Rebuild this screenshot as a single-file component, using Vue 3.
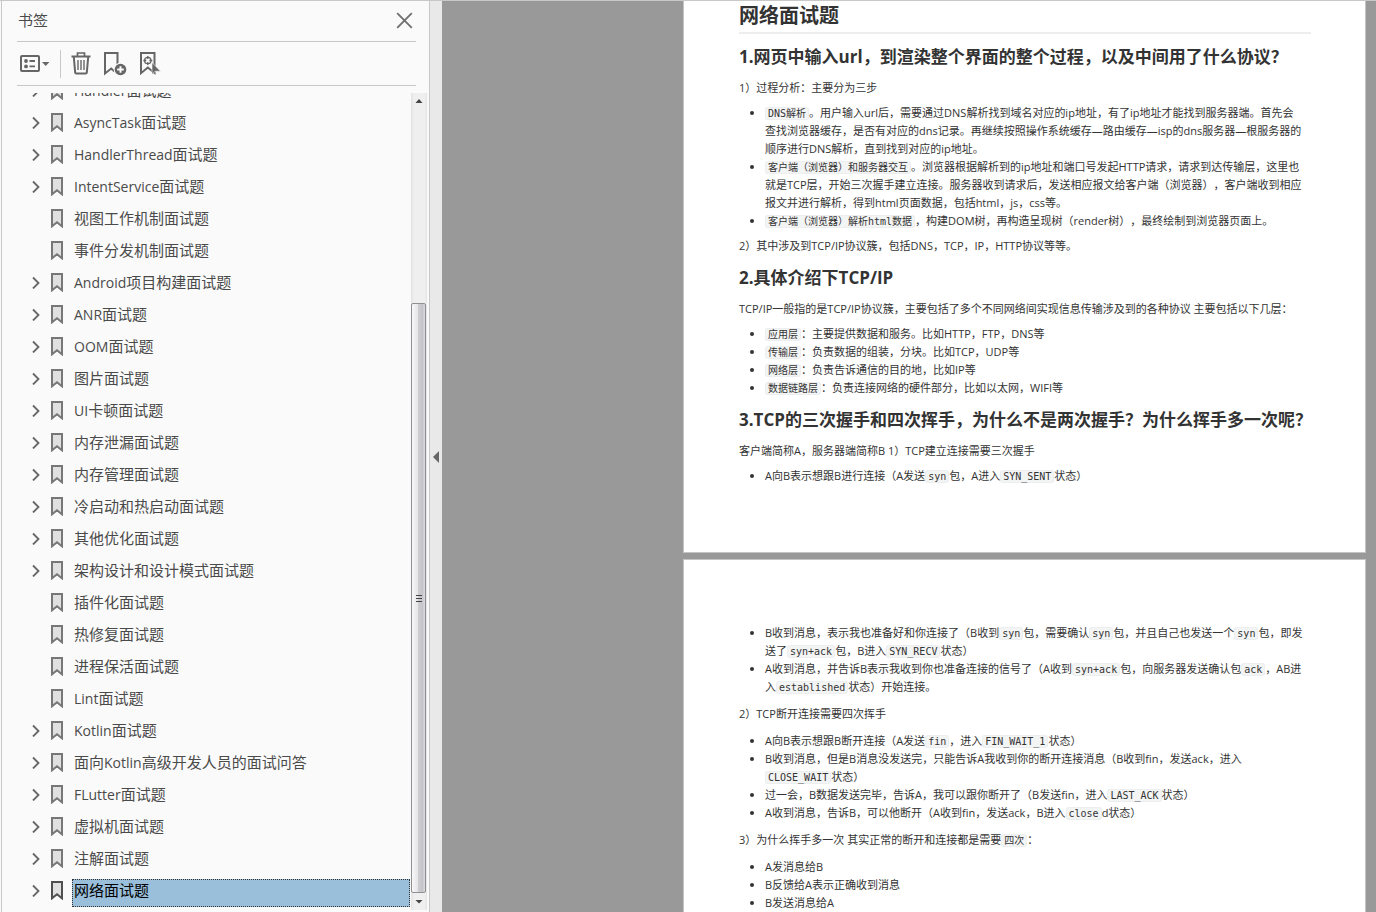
<script setup>
import { ref } from 'vue'

const bookmarks = [
  { title: 'Handler面试题', branch: true },
  { title: 'AsyncTask面试题', branch: true },
  { title: 'HandlerThread面试题', branch: true },
  { title: 'IntentService面试题', branch: true },
  { title: '视图工作机制面试题', branch: false },
  { title: '事件分发机制面试题', branch: false },
  { title: 'Android项目构建面试题', branch: true },
  { title: 'ANR面试题', branch: true },
  { title: 'OOM面试题', branch: true },
  { title: '图片面试题', branch: true },
  { title: 'UI卡顿面试题', branch: true },
  { title: '内存泄漏面试题', branch: true },
  { title: '内存管理面试题', branch: true },
  { title: '冷启动和热启动面试题', branch: true },
  { title: '其他优化面试题', branch: true },
  { title: '架构设计和设计模式面试题', branch: true },
  { title: '插件化面试题', branch: false },
  { title: '热修复面试题', branch: false },
  { title: '进程保活面试题', branch: false },
  { title: 'Lint面试题', branch: false },
  { title: 'Kotlin面试题', branch: true },
  { title: '面向Kotlin高级开发人员的面试问答', branch: true },
  { title: 'FLutter面试题', branch: true },
  { title: '虚拟机面试题', branch: true },
  { title: '注解面试题', branch: true },
  { title: '网络面试题', branch: true },
]
const selected = ref(bookmarks.length - 1)

// Backticks mark inline code, a newline is a line break.
const pages = [
  [
    { tag: 'h1', text: '网络面试题' },
    { tag: 'h2', text: '1.网页中输入url，到渲染整个界面的整个过程，以及中间用了什么协议？' },
    { tag: 'p', text: '1）过程分析：主要分为三步' },
    {
      tag: 'ul',
      items: [
        '`DNS解析`。用户输入url后，需要通过DNS解析找到域名对应的ip地址，有了ip地址才能找到服务器端。首先会\n查找浏览器缓存，是否有对应的dns记录。再继续按照操作系统缓存—路由缓存—isp的dns服务器—根服务器的\n顺序进行DNS解析，直到找到对应的ip地址。',
        '`客户端（浏览器）和服务器交互`。浏览器根据解析到的ip地址和端口号发起HTTP请求，请求到达传输层，这里也\n就是TCP层，开始三次握手建立连接。服务器收到请求后，发送相应报文给客户端（浏览器），客户端收到相应\n报文并进行解析，得到html页面数据，包括html，js，css等。',
        '`客户端（浏览器）解析html数据`，构建DOM树，再构造呈现树（render树），最终绘制到浏览器页面上。',
      ],
    },
    { tag: 'p', text: '2）其中涉及到TCP/IP协议簇，包括DNS，TCP，IP，HTTP协议等等。' },
    { tag: 'h2', text: '2.具体介绍下TCP/IP' },
    { tag: 'p', text: 'TCP/IP一般指的是TCP/IP协议簇，主要包括了多个不同网络间实现信息传输涉及到的各种协议 主要包括以下几层：' },
    {
      tag: 'ul',
      items: [
        '`应用层`：主要提供数据和服务。比如HTTP，FTP，DNS等',
        '`传输层`：负责数据的组装，分块。比如TCP，UDP等',
        '`网络层`：负责告诉通信的目的地，比如IP等',
        '`数据链路层`：负责连接网络的硬件部分，比如以太网，WIFI等',
      ],
    },
    { tag: 'h2', text: '3.TCP的三次握手和四次挥手，为什么不是两次握手？为什么挥手多一次呢？' },
    { tag: 'p', text: '客户端简称A，服务器端简称B 1）TCP建立连接需要三次握手' },
    { tag: 'ul', items: ['A向B表示想跟B进行连接（A发送`syn`包，A进入`SYN_SENT`状态）'] },
  ],
  [
    {
      tag: 'ul',
      items: [
        'B收到消息，表示我也准备好和你连接了（B收到`syn`包，需要确认`syn`包，并且自己也发送一个`syn`包，即发\n送了`syn+ack`包，B进入`SYN_RECV`状态）',
        'A收到消息，并告诉B表示我收到你也准备连接的信号了（A收到`syn+ack`包，向服务器发送确认包`ack`，AB进\n入`established`状态）开始连接。',
      ],
    },
    { tag: 'p', text: '2）TCP断开连接需要四次挥手' },
    {
      tag: 'ul',
      items: [
        'A向B表示想跟B断开连接（A发送`fin`，进入`FIN_WAIT_1`状态）',
        'B收到消息，但是B消息没发送完，只能告诉A我收到你的断开连接消息（B收到fin，发送ack，进入\n`CLOSE_WAIT`状态）',
        '过一会，B数据发送完毕，告诉A，我可以跟你断开了（B发送fin，进入`LAST_ACK`状态）',
        'A收到消息，告诉B，可以他断开（A收到fin，发送ack，B进入`close`d状态）',
      ],
    },
    { tag: 'p', text: '3）为什么挥手多一次 其实正常的断开和连接都是需要`四次`：' },
    { tag: 'ul', items: ['A发消息给B', 'B反馈给A表示正确收到消息', 'B发送消息给A'] },
  ],
]

// Splits a line into inline code and plain text.
function tokens(text) {
  return text
    .split(/(`[^`]+`)/)
    .filter(Boolean)
    .map((part) =>
      part[0] === '`' ? { tag: 'code', text: part.slice(1, -1) } : { tag: 'span', text: part },
    )
}

function scripts(title) {
  return title
    .split(/([A-Za-z]+)/)
    .filter(Boolean)
    .map((text) => ({ text, latin: /^[A-Za-z]/.test(text) }))
}
</script>

<template>
  <div class="app">
    <aside class="sidebar">
      <header class="title">
        <h2>书签</h2>
        <button type="button" class="icon" aria-label="关闭">
          <svg width="17" height="17" viewBox="0 0 17 17"><path d="M1.2 1.2 15.8 15.8M15.8 1.2 1.2 15.8" fill="none" stroke="#707070" stroke-width="1.9" /></svg>
        </button>
      </header>
      <div class="toolbar">
        <button type="button" class="icon" aria-label="选项">
          <svg width="30" height="18" viewBox="0 0 30 18">
            <rect x="1" y="1" width="18" height="15" rx="1" fill="none" stroke="#666" stroke-width="2" />
            <circle cx="6" cy="6" r="1.9" fill="#666" /><circle cx="6" cy="11.4" r="1.9" fill="#666" />
            <path d="M9.5 6H15M9.5 11.4H15" stroke="#666" stroke-width="1.8" />
            <path d="M22 7H29.4L25.7 11Z" fill="#666" />
          </svg>
        </button>
        <span class="divider"></span>
        <button type="button" class="icon" aria-label="删除">
          <svg width="20" height="24" viewBox="0 0 20 24" fill="none" stroke="#666">
            <path d="M.5 4.5H19.5" stroke-width="2" />
            <path d="M6.5 4V1H13.5V4" stroke-width="1.7" />
            <path d="M2.8 5 4.2 20.7Q4.3 21.5 5.2 21.5H14.8Q15.7 21.5 15.8 20.7L17.2 5" stroke-width="2" />
            <path d="M7 8V18M10 8V18M13 8V18" stroke-width="1.4" />
          </svg>
        </button>
        <button type="button" class="icon tool" aria-label="新建书签">
          <svg width="23" height="24" viewBox="0 0 23 24">
            <path d="M1 1H13.5V16L10 19 7.2 16.5 1 21.5Z" fill="none" stroke="#666" stroke-width="2" />
            <circle cx="16.5" cy="17.5" r="6.8" fill="#fafafa" />
            <circle cx="16.5" cy="17.5" r="5.8" fill="#666" />
            <path d="M16.5 14.2V20.8M13.2 17.5H19.8" stroke="#fff" stroke-width="1.9" />
          </svg>
        </button>
        <button type="button" class="icon tool" aria-label="查找当前书签">
          <svg width="22" height="24" viewBox="0 0 22 24">
            <path d="M1 21.2V1H14.5V21L7.8 15.5Z" fill="none" stroke="#666" stroke-width="2" />
            <circle cx="7.8" cy="8.5" r="3.2" fill="none" stroke="#666" stroke-width="1.3" />
            <path d="M7.8 4V7M7.8 10V13M3.3 8.5H6.3M9.3 8.5H12.3" stroke="#666" stroke-width="1.3" />
            <path d="M12 10.5V22.6L15 19.2H20.5Z" fill="#666" stroke="#fafafa" stroke-width=".6" />
          </svg>
        </button>
      </div>
      <div class="tree-area">
        <div class="tree">
          <ul>
            <li v-for="(item, i) in bookmarks" :key="item.title" :class="{ selected: i === selected }">
              <button v-if="item.branch" type="button" class="icon expand" :aria-label="'展开 ' + item.title">
                <svg width="9" height="14" viewBox="0 0 9 14"><path d="M1 2.5 6.5 8 1 13.5" fill="none" stroke="#666" stroke-width="1.8" /></svg>
              </button>
              <span v-else class="expand"></span>
              <svg class="flag" width="12" height="20" viewBox="0 0 12 20"><path d="M1 2H11V18.3L6 14.2 1 18.3Z" /></svg>
              <button type="button" class="label" @click="selected = i"><span v-for="(s, k) in scripts(item.title)" :key="k" :class="{ latin: s.latin }">{{ s.text }}</span></button>
            </li>
          </ul>
        </div>
        <div class="scrollbar">
          <span class="arrow"><svg width="8" height="5" viewBox="0 0 8 5"><path d="M4 0 7.5 4H.5Z" fill="#444" /></svg></span>
          <span class="thumb"><i></i><i></i><i></i></span>
          <span class="arrow"><svg width="8" height="5" viewBox="0 0 8 5"><path d="M.5 1H7.5L4 4.5Z" fill="#444" /></svg></span>
        </div>
      </div>
    </aside>
    <button type="button" class="collapse" aria-label="折叠">
      <svg width="6" height="12" viewBox="0 0 6 12"><path d="M6 0V12L0 6Z" fill="#666" /></svg>
    </button>
    <main class="viewer">
      <article v-for="(blocks, n) in pages" :key="n" class="page" :class="{ next: n > 0 }">
        <template v-for="(block, b) in blocks" :key="b">
          <ul v-if="block.tag === 'ul'">
            <li v-for="item in block.items" :key="item"><component :is="t.tag" v-for="(t, k) in tokens(item)" :key="k">{{ t.text }}</component></li>
          </ul>
          <component :is="block.tag" v-else><component :is="t.tag" v-for="(t, k) in tokens(block.text)" :key="k">{{ t.text }}</component></component>
        </template>
      </article>
    </main>
  </div>
</template>

<style>
body {
  margin: 0;
  overflow: hidden;
}
</style>

<style scoped>
* {
  box-sizing: border-box;
}
.app {
  display: flex;
  height: 100vh;
  overflow: hidden;
  border-top: 1px solid #c8c8c8;
  background: #fafafa;
  font-family: "Open Sans", "Noto Sans CJK SC", sans-serif;
  text-spacing-trim: space-all;
}
button {
  font: inherit;
  border: 0;
  padding: 0;
  background: none;
}
svg {
  display: block;
  flex: none;
}
.icon {
  display: flex;
  flex: none;
}
.sidebar {
  display: flex;
  flex-direction: column;
  flex: none;
  width: 429px;
  margin-left: 1px;
  border: solid #c8c8c8;
  border-width: 0 1px;
}
.title {
  display: flex;
  align-items: center;
  justify-content: space-between;
  height: 41px;
  margin: 0 13px 0 15px;
  padding: 0 3px 2px 1px;
  border-bottom: 1px solid #c8c8c8;
}
.title h2 {
  margin: 0;
  font-size: 15px;
  line-height: 22px;
  font-weight: 400;
  color: #4a4a4a;
}
.toolbar {
  display: flex;
  align-items: center;
  height: 44px;
  margin: 0 13px 0 15px;
  padding-left: 3px;
  border-bottom: 1px solid #c8c8c8;
}
.divider {
  width: 1px;
  height: 28px;
  margin: 0 10px;
  background: #c8c8c8;
}
.tool {
  margin-left: 13px;
}
.tree-area {
  display: flex;
  flex: 1;
  min-height: 0;
  margin: 7px 2px 0 0;
}
.tree {
  flex: 1;
  overflow: hidden;
}
.tree ul {
  list-style: none;
  margin: -19px 0 0;
  padding: 0 1px 0 30px;
}
.tree li {
  display: flex;
  align-items: center;
  height: 32px;
}
.expand {
  width: 9px;
  margin-right: 10px;
}
.flag path {
  fill: #e0e0e0;
  stroke: #777;
  stroke-width: 2;
}
.selected .flag path {
  stroke: #505050;
}
.label {
  flex: 1;
  height: 28px;
  margin: 5px 0 0 9px;
  padding: 0 0 6px 1px;
  border: 1px dotted transparent;
  font-size: 15px;
  line-height: 20px;
  text-align: left;
  white-space: nowrap;
  color: #4a4a4a;
}
.latin {
  font-size: 14px;
}
.selected .label {
  background: #9abfda;
  border-color: #333;
  color: #000;
}
.scrollbar {
  display: flex;
  flex-direction: column;
  width: 16px;
  margin-bottom: 2px;
  background: linear-gradient(90deg, #e2e2e2, #efefef 3px, #efefef 14px, #e2e2e2);
}
.arrow {
  display: flex;
  align-items: center;
  justify-content: center;
  height: 17px;
}
.thumb {
  display: flex;
  flex: 1;
  flex-direction: column;
  align-items: center;
  justify-content: center;
  gap: 2px;
  margin-top: 193px;
  margin-right: 1px;
  border: 1px solid #909094;
  border-radius: 2px;
  background: linear-gradient(90deg, #f8f8f9, #e6e6e9 45%, #cdcdd2 50%, #c4c4ca 80%, #dcdce0);
}
.thumb i {
  width: 6px;
  height: 1px;
  background: #444;
}
.collapse {
  display: flex;
  align-items: center;
  justify-content: center;
  flex: none;
  width: 12px;
  background: #e9e9e9;
}
.viewer {
  display: flex;
  flex: 1;
  flex-direction: column;
  gap: 6px;
  min-width: 0;
  padding: 0 10px 0 241px;
  background: #999;
}
.page {
  flex: none;
  padding: 0 54px 60px 55px;
  border: solid #c4c4c4;
  border-width: 0 1px 1px;
  background: #fff;
  color: #333;
  font-size: 11px;
  line-height: 18px;
  white-space: pre;
}
.next {
  padding-top: 64px;
  border-top-width: 1px;
}
.page h1 {
  margin: 0;
  padding-bottom: 1px;
  border-bottom: 2px solid #eee;
  font-size: 20px;
  line-height: 30px;
}
.page h2 {
  margin: 11px 0 10px;
  font-size: 17px;
  line-height: 24px;
}
.page p {
  margin: 0;
}
.page ul {
  margin: 7px 0;
  padding-left: 26px;
}
.next ul {
  margin: 9px 0;
}
.next ul:first-child {
  margin-top: 0;
}
.page code {
  padding: 0 2px;
  border: 1px solid #eceef0;
  border-radius: 3px;
  background: #f3f4f4;
  font-family: "DejaVu Sans Mono", "Noto Sans CJK SC", monospace;
  font-size: 10px;
  line-height: 12px;
}
</style>
